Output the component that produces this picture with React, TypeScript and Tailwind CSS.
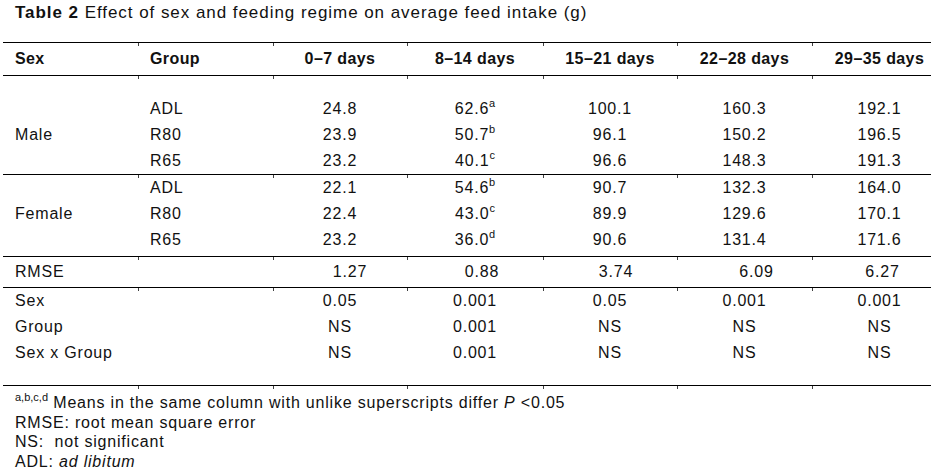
import React from 'react';

type Cell = string | [string, string];

const cols = 'grid grid-cols-[135px_135px_134px_136px_134px_135px_135px]';

const male: Cell[][] = [
  ['', 'ADL', '24.8', ['62.6', 'a'], '100.1', '160.3', '192.1'],
  ['Male', 'R80', '23.9', ['50.7', 'b'], '96.1', '150.2', '196.5'],
  ['', 'R65', '23.2', ['40.1', 'c'], '96.6', '148.3', '191.3'],
];

const female: Cell[][] = [
  ['', 'ADL', '22.1', ['54.6', 'b'], '90.7', '132.3', '164.0'],
  ['Female', 'R80', '22.4', ['43.0', 'c'], '89.9', '129.6', '170.1'],
  ['', 'R65', '23.2', ['36.0', 'd'], '90.6', '131.4', '171.6'],
];

const effects: Cell[][] = [
  ['Sex', '', '0.05', '0.001', '0.05', '0.001', '0.001'],
  ['Group', '', 'NS', '0.001', 'NS', 'NS', 'NS'],
  ['Sex x Group', '', 'NS', '0.001', 'NS', 'NS', 'NS'],
];

// RMSE values sit a little right of centre in the source table
const rmse = [
  { v: '1.27', pad: 'pl-[20px]' },
  { v: '0.88', pad: 'pl-[14px]' },
  { v: '3.74', pad: 'pl-[12px]' },
  { v: '6.09', pad: 'pl-[24px]' },
  { v: '6.27', pad: 'pl-[6px]' },
];

function Rule() {
  return (
    <div>
      <div className="h-px bg-black" />
      <div className={`${cols} h-[3px] -mb-[3px]`}>
        {[0, 1, 2, 3, 4, 5, 6].map(i => (
          <div key={i} className={i ? 'border-l border-neutral-700' : ''} />
        ))}
      </div>
    </div>
  );
}

function Value({ cell }: { cell: Cell }) {
  if (typeof cell === 'string') return <>{cell}</>;
  return (
    <>
      {cell[0]}
      <sup className="text-[11px] tracking-normal top-[-0.6em]">{cell[1]}</sup>
    </>
  );
}

function Row({ row }: { row: Cell[] }) {
  return (
    <div className={`${cols} h-[26px] leading-[26px]`}>
      {row.map((c, i) => (
        <div key={i} className={i < 2 ? 'pl-3 whitespace-nowrap' : 'text-center whitespace-nowrap'}>
          <Value cell={c} />
        </div>
      ))}
    </div>
  );
}

export default function App() {
  return (
    <div
      className="w-[931px] h-[472px] overflow-hidden bg-white text-[#111] text-[16px] tracking-[0.8px]"
      style={{ fontFamily: '"Liberation Sans", Arial, sans-serif' }}
    >
      <div className="h-[42px] pt-[3px] pl-[15px] text-[17px] leading-[20px] tracking-[0.95px] whitespace-nowrap">
        <span className="font-bold">Table 2</span> Effect of sex and feeding regime on average feed intake (g)
      </div>

      <div className="ml-[3px] w-[944px]">
        <Rule />
        <div className={`${cols} h-[32px] leading-[32px] font-bold tracking-[0.4px]`}>
          <div className="pl-3">Sex</div>
          <div className="pl-3">Group</div>
          <div className="text-center">0–7 days</div>
          <div className="text-center">8–14 days</div>
          <div className="text-center">15–21 days</div>
          <div className="text-center">22–28 days</div>
          <div className="text-center">29–35 days</div>
        </div>
        <Rule />

        <div className="pt-[20px]">
          {male.map((r, i) => <Row key={i} row={r} />)}
        </div>
        <Rule />

        <div className="pb-[3px]">
          {female.map((r, i) => <Row key={i} row={r} />)}
        </div>
        <Rule />

        <div className="pt-[2px] pb-[2px]">
          <div className={`${cols} h-[26px] leading-[26px]`}>
            <div className="pl-3">RMSE</div>
            <div />
            {rmse.map(r => (
              <div key={r.v} className={`text-center ${r.pad}`}>{r.v}</div>
            ))}
          </div>
        </div>
        <Rule />

        <div className="pb-[19px]">
          {effects.map((r, i) => <Row key={i} row={r} />)}
        </div>
        <Rule />
      </div>

      <div className="pt-[7px] pl-[15px] leading-[19.5px] tracking-[0.8px]">
        <div className="whitespace-nowrap">
          <sup className="text-[11px] tracking-normal top-[-0.6em]">a,b,c,d</sup> Means in the same column with unlike superscripts differ <i>P</i> &lt;0.05
        </div>
        <div>RMSE: root mean square error</div>
        <div className="whitespace-pre">NS:  not significant</div>
        <div>
          ADL: <i>ad libitum</i>
        </div>
      </div>
    </div>
  );
}
